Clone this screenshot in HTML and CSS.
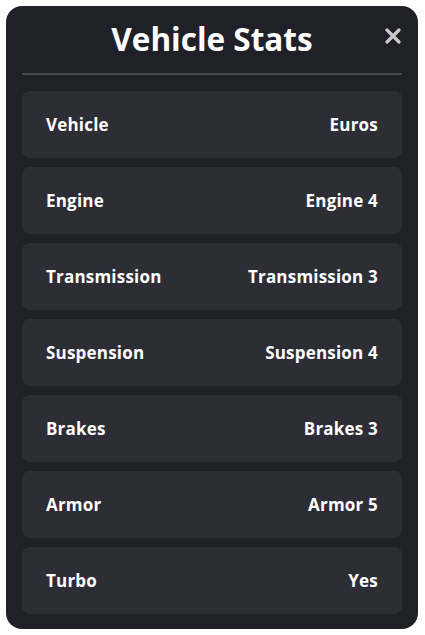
FILE: index.html
```html
<!DOCTYPE html>
<html>
  <head>
    <title>Vehicle Stats</title>
    <link rel="stylesheet" href="styles.css">
  </head>
  <body>
    <div class="panel">
      <h1 class="title">Vehicle Stats</h1>
      <span class="close">
        <svg width="16" height="16" viewBox="0 0 16 16">
          <path d="M2 2 L14 14 M14 2 L2 14" stroke="#c9c9cc" stroke-width="3.2" stroke-linecap="round"/>
        </svg>
      </span>
      <div class="divider"></div>
      <div class="rows">
        <div class="row"><span>Vehicle</span><span>Euros</span></div>
        <div class="row"><span>Engine</span><span>Engine 4</span></div>
        <div class="row"><span>Transmission</span><span>Transmission 3</span></div>
        <div class="row"><span>Suspension</span><span>Suspension 4</span></div>
        <div class="row"><span>Brakes</span><span>Brakes 3</span></div>
        <div class="row"><span>Armor</span><span>Armor 5</span></div>
        <div class="row"><span>Turbo</span><span>Yes</span></div>
      </div>
    </div>
  </body>
</html>
```
FILE: styles.css
```css
body {
  margin: 0;
  padding: 6px;
  background: #fff;
  font-family: "Open Sans", "Noto Sans", sans-serif;
}
.panel {
  position: relative;
  width: 412px;
  box-sizing: border-box;
  padding: 11px 16px 15px 16px;
  background: #202028;
  border-radius: 16px;
  color: #fff;
}
.title {
  margin: 0;
  font-size: 31.5px;
  line-height: 44px;
  font-weight: 700;
  text-align: center;
}
.close {
  position: absolute;
  top: 22px;
  right: 17px;
  width: 16px;
  height: 16px;
}
.close svg { display: block; }
.divider {
  height: 2px;
  margin-top: 12px;
  background: #48484f;
}
.rows {
  display: flex;
  flex-direction: column;
  gap: 9px;
  margin-top: 16px;
}
.row {
  display: flex;
  justify-content: space-between;
  align-items: center;
  height: 67px;
  padding: 0 24px;
  background: #2d2d36;
  border-radius: 8px;
  font-size: 17px;
  font-weight: 700;
  letter-spacing: 0.2px;
}
```
